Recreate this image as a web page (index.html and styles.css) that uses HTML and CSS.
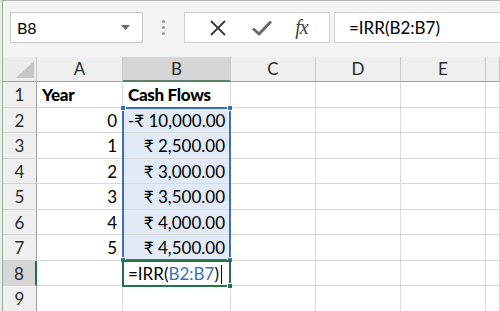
FILE: index.html
```html
<!DOCTYPE html>
<html lang="en">
<head>
    <meta charset="UTF-8">
    <title>IRR</title>
    <link rel="stylesheet" href="styles.css">
</head>
<body>
<div class="window">
    <div class="toolbar">
        <div class="namebox">
            <span>B8</span>
            <svg class="caret" width="9" height="5" viewBox="0 0 9 5"><path d="M0 0h9L4.5 5z" fill="#6b6b6b"/></svg>
        </div>
        <div class="grip"><i></i><i></i><i></i></div>
        <div class="buttons">
            <svg width="20" height="20" viewBox="0 0 20 20"><path d="M3 3L17 17M17 3L3 17" stroke="#3a3a3a" stroke-width="1.8" fill="none"/></svg>
            <svg width="22" height="20" viewBox="0 0 22 20"><path d="M2 10.5L8 16L20 3.5" stroke="#6a6a6a" stroke-width="3" fill="none" stroke-linejoin="round"/></svg>
            <span class="fx">fx</span>
        </div>
        <div class="formula">=IRR(B2:B7)</div>
    </div>

    <div class="sheet">
        <div class="corner"><svg width="18" height="17" viewBox="0 0 18 17"><path d="M18 0V17H0z" fill="#c6c6c6"/></svg></div>
        <div class="colhead">A</div>
        <div class="colhead active">B</div>
        <div class="colhead">C</div>
        <div class="colhead">D</div>
        <div class="colhead">E</div>
        <div class="colhead"></div>

        <div class="rowhead">1</div>
        <div class="cell bold">Year</div>
        <div class="cell bold">Cash Flows</div>
        <div class="cell"></div><div class="cell"></div><div class="cell"></div><div class="cell"></div>

        <div class="rowhead">2</div>
        <div class="cell num">0</div>
        <div class="cell num ref">-₹ 10,000.00</div>
        <div class="cell"></div><div class="cell"></div><div class="cell"></div><div class="cell"></div>

        <div class="rowhead">3</div>
        <div class="cell num">1</div>
        <div class="cell num ref">₹ 2,500.00</div>
        <div class="cell"></div><div class="cell"></div><div class="cell"></div><div class="cell"></div>

        <div class="rowhead">4</div>
        <div class="cell num">2</div>
        <div class="cell num ref">₹ 3,000.00</div>
        <div class="cell"></div><div class="cell"></div><div class="cell"></div><div class="cell"></div>

        <div class="rowhead">5</div>
        <div class="cell num">3</div>
        <div class="cell num ref">₹ 3,500.00</div>
        <div class="cell"></div><div class="cell"></div><div class="cell"></div><div class="cell"></div>

        <div class="rowhead">6</div>
        <div class="cell num">4</div>
        <div class="cell num ref">₹ 4,000.00</div>
        <div class="cell"></div><div class="cell"></div><div class="cell"></div><div class="cell"></div>

        <div class="rowhead">7</div>
        <div class="cell num">5</div>
        <div class="cell num ref">₹ 4,500.00</div>
        <div class="cell"></div><div class="cell"></div><div class="cell"></div><div class="cell"></div>

        <div class="rowhead active">8</div>
        <div class="cell"></div>
        <div class="cell edit">=IRR(<span class="blue">B2:B7</span>)<span class="cursor"></span></div>
        <div class="cell"></div><div class="cell"></div><div class="cell"></div><div class="cell"></div>

        <div class="rowhead">9</div>
        <div class="cell"></div><div class="cell"></div>
        <div class="cell"></div><div class="cell"></div><div class="cell"></div><div class="cell"></div>

        <div class="range">
            <b class="h tl"></b><b class="h tr"></b><b class="h bl"></b><b class="h br"></b>
        </div>
        <div class="active-cell"><b class="h br"></b></div>
    </div>
</div>
</body>
</html>
```

FILE: styles.css
```css
*{
    padding: 0;
    margin: 0;
    box-sizing: border-box;
}
html, body{
    background: #f3f3f3;
    overflow: hidden;
}
.window{
    width: 500px;
    height: 311px;
    border-top: 1px solid #b4b4b4;
    border-left: 3px solid #ececec;
    font-family: Lato, "Noto Sans", "DejaVu Sans", sans-serif;
    color: #000;
}
.window::before{
    content: "";
    position: absolute;
    top: 0;
    left: 2px;
    width: 1px;
    height: 311px;
    background: #98ab9e;
}

/* formula bar */
.toolbar{
    display: flex;
    align-items: center;
    height: 56px;
    padding: 0 0 3px 7px;
}
.namebox{
    width: 133px;
    height: 31px;
    background: #fff;
    border: 1px solid #c8c8c8;
    display: flex;
    align-items: center;
    justify-content: space-between;
    padding: 0 12px 0 6px;
    font-size: 16px;
}
.grip{
    width: 41px;
    display: flex;
    flex-direction: column;
    align-items: center;
    gap: 3px;
}
.grip i{
    width: 3px;
    height: 3px;
    border-radius: 50%;
    background: #9a9a9a;
}
.buttons{
    width: 146px;
    height: 31px;
    background: #fff;
    border: 1px solid #d0d0d0;
    display: flex;
    align-items: center;
    justify-content: space-around;
    padding: 0 10px 0 12px;
}
.fx{
    font-family: "Liberation Serif", serif;
    font-style: italic;
    font-size: 20px;
    color: #444;
    letter-spacing: -1px;
}
.formula{
    flex: 1;
    height: 31px;
    margin-left: 4px;
    background: #fff;
    border: 1px solid #d0d0d0;
    border-right: none;
    padding: 4px 0 0 14px;
    font-size: 17px;
}

/* sheet */
.sheet{
    position: relative;
    display: grid;
    grid-template-columns: 34px 86px 108px 85px 85px 85px 1fr;
    grid-template-rows: 25px repeat(9, 25.5px);
    background: #fff;
    font-size: 17px;
}
.corner{
    background: #ececec;
    border-right: 1px solid #c8c8c8;
    border-bottom: 1px solid #9f9f9f;
    display: flex;
    align-items: flex-end;
    justify-content: flex-end;
    padding: 0 2px 3px 0;
}
.colhead{
    background: #efefef;
    border-right: 1px solid #c8c8c8;
    border-bottom: 1px solid #9f9f9f;
    text-align: center;
    line-height: 24px;
    color: #2b2b2b;
}
.colhead.active{
    background: #d6d6d6;
    border-bottom: 2px solid #5b7f67;
}
.rowhead{
    background: #efefef;
    border-right: 1px solid #9f9f9f;
    border-bottom: 1px solid #d4d4d4;
    text-align: center;
    line-height: 25px;
    color: #2b2b2b;
}
.rowhead.active{
    background: #d6d6d6;
    border-right: 2px solid #217346;
}
.cell{
    border-right: 1px solid #d9d9d9;
    border-bottom: 1px solid #d9d9d9;
    line-height: 25px;
    padding: 0 5px;
    white-space: nowrap;
}
.bold{
    font-weight: 900;
    font-size: 17px;
    letter-spacing: -0.3px;
}
.num{
    text-align: right;
}
.ref{
    background: #e1eaf6;
}
.edit{
    padding-left: 5px;
}
.blue{
    color: #3c6fb5;
}
.cursor{
    display: inline-block;
    width: 1px;
    height: 19px;
    margin-left: 2px;
    vertical-align: -4px;
    background: #000;
}

/* selection overlays */
.range{
    position: absolute;
    grid-column: 3 / 4;
    grid-row: 3 / 9;
    inset: -1px 0 0 -1px;
    border: 2px solid #3a6eb8;
}
.active-cell{
    position: absolute;
    grid-column: 3 / 4;
    grid-row: 9 / 10;
    inset: -1px 0 -1px -1px;
    border: 2px solid #217346;
}
.h{
    position: absolute;
    width: 6px;
    height: 6px;
    background: #3a6eb8;
    border: 1px solid #fff;
}
.tl{ top: -4px; left: -4px; }
.tr{ top: -4px; right: -4px; }
.bl{ bottom: -4px; left: -4px; }
.br{ bottom: -4px; right: -4px; }
.active-cell .h{
    background: #217346;
}
```
